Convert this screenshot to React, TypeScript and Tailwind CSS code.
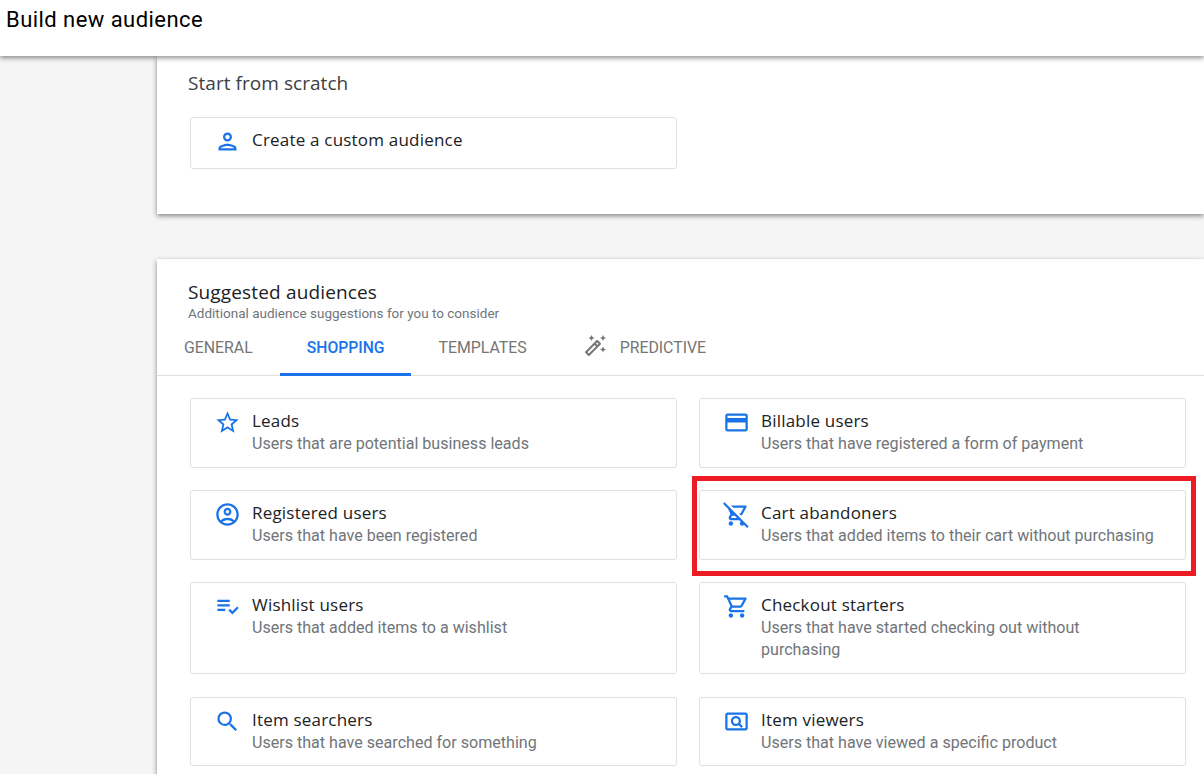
import type { ReactNode } from "react";
import {
  MdOutlinePerson,
  MdStarBorder,
  MdCreditCard,
  MdOutlineAccountCircle,
  MdOutlineRemoveShoppingCart,
  MdPlaylistAddCheck,
  MdOutlineShoppingCart,
  MdSearch,
  MdOutlinePageview,
  MdOutlineAutoFixHigh,
} from "react-icons/md";

const TITLE_FONT = "font-['Open_Sans',sans-serif]";
const BODY_FONT = "font-['Roboto',sans-serif]";

const audiences = [
  { title: "Leads", text: "Users that are potential business leads", icon: <MdStarBorder /> },
  { title: "Billable users", text: "Users that have registered a form of payment", icon: <MdCreditCard /> },
  { title: "Registered users", text: "Users that have been registered", icon: <MdOutlineAccountCircle /> },
  { title: "Cart abandoners", text: "Users that added items to their cart without purchasing", icon: <MdOutlineRemoveShoppingCart />, marked: true },
  { title: "Wishlist users", text: "Users that added items to a wishlist", icon: <MdPlaylistAddCheck /> },
  { title: "Checkout starters", text: "Users that have started checking out without purchasing", icon: <MdOutlineShoppingCart /> },
  { title: "Item searchers", text: "Users that have searched for something", icon: <MdSearch /> },
  { title: "Item viewers", text: "Users that have viewed a specific product", icon: <MdOutlinePageview /> },
];

function AudienceCard({ title, text, icon, marked }: { title: string; text?: string; icon: ReactNode; marked?: boolean }) {
  return (
    <div className="relative flex h-full rounded-[3px] border border-[#e0e0e0] bg-white pl-[23px] pr-[27px] pt-[11px]">
      <div className="-mt-[1px] w-[38px] shrink-0 text-[27px] text-[#1a73e8]">{icon}</div>
      <div>
        <div className={`${TITLE_FONT} text-[17px] font-medium leading-[22px] tracking-[0.2px] text-[#202124]`}>{title}</div>
        {text && <div className={`${BODY_FONT} mt-px text-[16.08px] leading-[22px] text-[#70757a]`}>{text}</div>}
      </div>
      {marked && <div className="absolute -left-[8px] -right-[11px] -top-[15px] -bottom-[17px] border-[5px] border-[#ed1c24]" />}
    </div>
  );
}

function Tab({ label, active, icon }: { label: string; active?: boolean; icon?: ReactNode }) {
  return (
    <div
      className={`${BODY_FONT} -mb-px flex h-[50px] items-center border-b-[3px] px-[27px] pb-[3px] ${
        active ? "border-[#1a73e8] text-[15.7px] font-medium text-[#1a73e8]" : "border-transparent text-[15.85px] text-[#757575]"
      }`}
    >
      {icon}
      {label}
    </div>
  );
}

export default function App() {
  return (
    <div className="flex h-[774px] flex-col overflow-hidden bg-[#f5f5f5]">
      <header className="relative z-10 h-14 shrink-0 bg-white pl-[6px] pt-[7px] shadow-[0_2px_5px_rgba(0,0,0,0.45)]">
        <h1 className={`${BODY_FONT} text-[22px] leading-[26px] tracking-[0.45px] text-black`}>Build new audience</h1>
      </header>

      <main className="flex flex-col gap-[45px] pl-[157px]">
        {/* Start from scratch */}
        <section className="h-[158px] bg-white pl-[31px] pt-[15px] shadow-[0_2px_5px_rgba(0,0,0,0.45)]">
          <h2 className={`${TITLE_FONT} text-[19px] leading-6 tracking-[0.05px] text-[#3c4043]`}>Start from scratch</h2>
          <div className="ml-[2px] mt-[22px] h-[52px] w-[487px]">
            <AudienceCard title="Create a custom audience" icon={<MdOutlinePerson />} />
          </div>
        </section>

        {/* Suggested audiences */}
        <section className="h-[600px] bg-white shadow-[0_2px_5px_rgba(0,0,0,0.45)]">
          <div className="pl-[31px] pt-[21px]">
            <h2 className={`${TITLE_FONT} text-[19px] leading-6 tracking-[0.15px] text-[#202124]`}>Suggested audiences</h2>
            <p className={`${BODY_FONT} mt-px text-[13.5px] leading-4 text-[#70757a]`}>Additional audience suggestions for you to consider</p>
          </div>
          <div className="flex h-[55px] items-end border-b border-[#e0e0e0]">
            <Tab label="GENERAL" />
            <Tab label="SHOPPING" active />
            <Tab label="TEMPLATES" />
            <Tab label="PREDICTIVE" icon={<MdOutlineAutoFixHigh className="mb-[4px] ml-[2px] mr-[13px] text-[24px]" />} />
          </div>
          <div className="grid grid-cols-[487px_487px] grid-rows-[69.7px_69.7px_92px_69.7px] gap-x-[22px] gap-y-[22.4px] pl-[33px] pt-[22px]">
            {audiences.map((a) => (
              <AudienceCard key={a.title} {...a} />
            ))}
          </div>
        </section>
      </main>
    </div>
  );
}
